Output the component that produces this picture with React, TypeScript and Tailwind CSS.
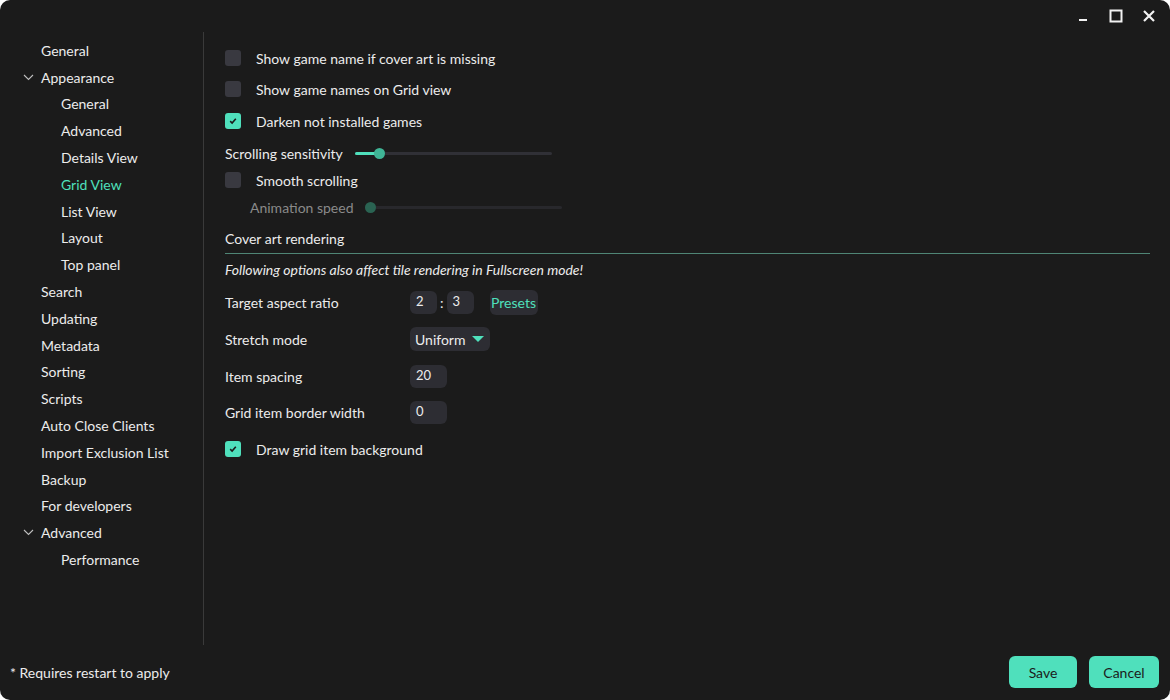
import React from 'react';

const navItems: { label: string; level: number; chevron?: boolean; active?: boolean }[] = [
  { label: 'General', level: 0 },
  { label: 'Appearance', level: 0, chevron: true },
  { label: 'General', level: 1 },
  { label: 'Advanced', level: 1 },
  { label: 'Details View', level: 1 },
  { label: 'Grid View', level: 1, active: true },
  { label: 'List View', level: 1 },
  { label: 'Layout', level: 1 },
  { label: 'Top panel', level: 1 },
  { label: 'Search', level: 0 },
  { label: 'Updating', level: 0 },
  { label: 'Metadata', level: 0 },
  { label: 'Sorting', level: 0 },
  { label: 'Scripts', level: 0 },
  { label: 'Auto Close Clients', level: 0 },
  { label: 'Import Exclusion List', level: 0 },
  { label: 'Backup', level: 0 },
  { label: 'For developers', level: 0 },
  { label: 'Advanced', level: 0, chevron: true },
  { label: 'Performance', level: 1 },
];

const Check: React.FC<{ checked?: boolean }> = ({ checked }) => (
  <div
    className={`w-4 h-4 rounded-[3px] flex items-center justify-center shrink-0 ${
      checked ? 'bg-[#4fe0bc]' : 'bg-[#393940]'
    }`}
  >
    {checked && (
      <svg width="8" height="8" viewBox="0 0 8 8">
        <path d="M1.2 4.2 L3.1 6 L6.8 1.8" fill="none" stroke="#1b1b1b" strokeWidth="1.6" />
      </svg>
    )}
  </div>
);

const CheckRow: React.FC<{ label: string; checked?: boolean; className?: string }> = ({ label, checked, className }) => (
  <div className={`flex items-center gap-[15px] h-[22px] ${className ?? ''}`}>
    <Check checked={checked} />
    <span>{label}</span>
  </div>
);

const Box: React.FC<{ children: React.ReactNode; w: string }> = ({ children, w }) => (
  <div className={`${w} h-[23px] rounded-[6px] bg-[#2d2d33] flex items-center pl-[6px] text-[13px]`}>{children}</div>
);

const App: React.FC = () => {
  return (
    <div
      className="w-[1170px] h-[700px] bg-[#1b1b1b] text-[#ececec] text-[14px] flex flex-col rounded-[10px] overflow-hidden"
      style={{ fontFamily: 'Lato, "Open Sans", sans-serif' }}
    >
      {/* Title bar */}
      <div className="h-[32px] flex justify-end items-center pr-[14px] gap-[19px] shrink-0">
        <svg width="14" height="14" viewBox="0 0 14 14">
          <rect x="3" y="10" width="8" height="2" fill="#f2f2f2" />
        </svg>
        <svg width="14" height="14" viewBox="0 0 14 14">
          <rect x="1.5" y="1.5" width="11" height="11" fill="none" stroke="#f2f2f2" strokeWidth="2" />
        </svg>
        <svg width="14" height="14" viewBox="0 0 14 14">
          <path d="M2 2 L12 12 M12 2 L2 12" stroke="#f2f2f2" strokeWidth="2.2" />
        </svg>
      </div>

      <div className="flex flex-1 min-h-0">
        {/* Sidebar */}
        <div className="w-[204px] shrink-0 border-r border-[#3a3a3a] pt-[5px]">
          {navItems.map((item, i) => (
            <div
              key={i}
              className={`h-[26.8px] flex items-center ${item.level === 1 ? 'pl-[61px]' : 'pl-[41px]'} relative ${
                item.active ? 'text-[#4fe0bc]' : ''
              }`}
            >
              {item.chevron && (
                <svg className="absolute left-[23px] top-[9px]" width="11" height="8" viewBox="0 0 11 8">
                  <path d="M1 2 L5.5 6.5 L10 2" fill="none" stroke="#bdbdbd" strokeWidth="1.1" />
                </svg>
              )}
              {item.label}
            </div>
          ))}
        </div>

        {/* Content */}
        <div className="flex-1 pl-[21px] pr-[20px] pt-[15px]">
          <CheckRow label="Show game name if cover art is missing" />
          <CheckRow label="Show game names on Grid view" className="mt-[9px]" />
          <CheckRow label="Darken not installed games" checked className="mt-[10px]" />

          <div className="flex items-center h-[22px] mt-[10px]">
            <span>Scrolling sensitivity</span>
            <div className="ml-[12px] w-[197px] h-[3px] rounded-full bg-[#303036] relative">
              <div className="absolute left-0 top-0 h-[3px] w-[24px] rounded-full bg-[#4fe0bc]" />
              <div className="absolute left-[19px] top-[-4px] w-[11px] h-[11px] rounded-full bg-[#3fb596]" />
            </div>
          </div>

          <CheckRow label="Smooth scrolling" className="mt-[5px]" />

          <div className="flex items-center h-[22px] mt-[5px] pl-[25px] text-[#8a8a8a]">
            <span>Animation speed</span>
            <div className="ml-[11px] w-[197px] h-[3px] rounded-full bg-[#28282c] relative">
              <div className="absolute left-0 top-[-4px] w-[11px] h-[11px] rounded-full bg-[#2a6352]" />
            </div>
          </div>

          <div className="mt-[10px] pb-[4px] border-b border-[#4f8575]">Cover art rendering</div>

          <div className="mt-[5px] italic text-[14px]">Following options also affect tile rendering in Fullscreen mode!</div>

          <div className="flex items-center h-[26px] mt-[9px]">
            <span className="w-[185px]">Target aspect ratio</span>
            <Box w="w-[27px]">2</Box>
            <span className="mx-[3px]">:</span>
            <Box w="w-[27px]">3</Box>
            <div className="ml-[16px] h-[25px] w-[48px] rounded-[6px] bg-[#2d2d33] flex items-center justify-center text-[#4fe0bc] text-[14px]">
              Presets
            </div>
          </div>

          <div className="flex items-center h-[26px] mt-[11px]">
            <span className="w-[185px]">Stretch mode</span>
            <div className="w-[80px] h-[24px] rounded-[6px] bg-[#2d2d33] flex items-center pl-[5px] gap-[7px]">
              <span>Uniform</span>
              <svg width="12" height="7" viewBox="0 0 12 7">
                <path d="M0 0 L12 0 L6 6 Z" fill="#4fe0bc" />
              </svg>
            </div>
          </div>

          <div className="flex items-center h-[26px] mt-[11px]">
            <span className="w-[185px]">Item spacing</span>
            <Box w="w-[37px]">20</Box>
          </div>

          <div className="flex items-center h-[26px] mt-[10px]">
            <span className="w-[185px]">Grid item border width</span>
            <Box w="w-[37px]">0</Box>
          </div>

          <CheckRow label="Draw grid item background" checked className="mt-[13px]" />
        </div>
      </div>

      {/* Footer */}
      <div className="h-[55px] shrink-0 flex items-center justify-between pl-[10px] pr-[11px] pb-[1px]">
        <span>* Requires restart to apply</span>
        <div className="flex gap-[12px] text-[#1b1b1b]">
          <button className="w-[68px] h-[32px] rounded-[6px] bg-[#4fe0bc]">Save</button>
          <button className="w-[70px] h-[32px] rounded-[6px] bg-[#4fe0bc]">Cancel</button>
        </div>
      </div>
    </div>
  );
};

export default App;
